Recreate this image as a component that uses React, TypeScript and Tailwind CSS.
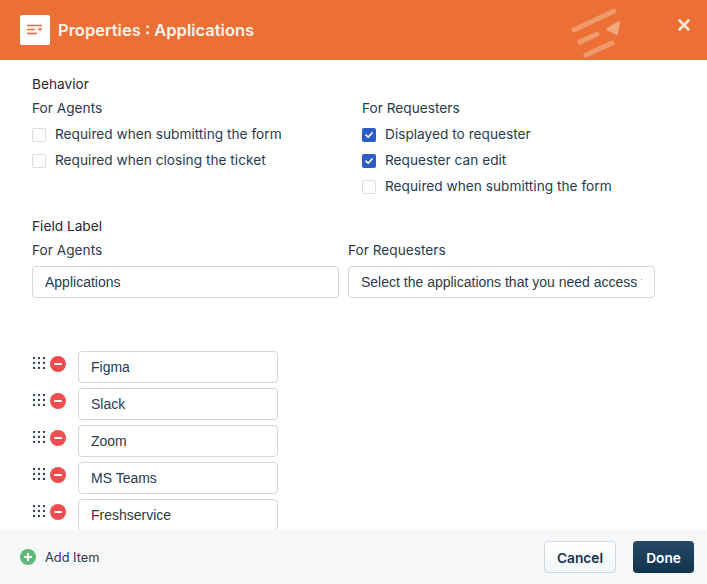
import React from "react";

const inter = "font-['Inter',sans-serif]";
const arial = "font-['Liberation_Sans',sans-serif]";

function Check({ label, checked }: { label: string; checked?: boolean }) {
  return (
    <div className="flex items-center h-[26px]">
      {checked ? (
        <span className="w-3.5 h-3.5 mt-[2px] rounded-[2px] bg-[#2c5cc5] flex items-center justify-center mr-[9px]">
          <svg width="10" height="10" viewBox="0 0 10 10" fill="none">
            <path d="M2 5.2 L4.2 7.2 L8 3" stroke="#fff" strokeWidth="1.7" strokeLinecap="round" strokeLinejoin="round" />
          </svg>
        </span>
      ) : (
        <span className="w-3.5 h-3.5 mt-[2px] rounded-[2px] bg-white border border-[#dadfe3] mr-[9px]" />
      )}
      <span className="text-[13.7px] leading-5 text-[#2a3b4d]">{label}</span>
    </div>
  );
}

function Grip() {
  const at = [1, 6, 11];
  return (
    <svg className="ml-px mb-[2px] shrink-0" width="12" height="12" viewBox="0 0 12 12" fill="#2a3b4d">
      {at.map((y) => at.map((x) => <circle key={`${x}-${y}`} cx={x} cy={y} r="1.15" />))}
    </svg>
  );
}

function Item({ label }: { label: string }) {
  return (
    <div className="flex items-start h-[37px] shrink-0">
      <div className="flex items-center w-[46px] pt-[5px]">
        <Grip />
        <span className="ml-[5px] w-4 h-4 rounded-full bg-[#ef4d4f] flex items-center justify-center">
          <span className="w-2 h-[2px] bg-white rounded-[1px]" />
        </span>
      </div>
      <div className={`w-[200px] h-8 rounded-[4px] bg-white border border-[#cfd7df] px-3 flex items-center text-[14px] text-[#2a3b4d] ${arial}`}>
        {label}
      </div>
    </div>
  );
}

function TextBox({ value, className }: { value: string; className: string }) {
  return (
    <div className={`h-8 rounded-[4px] bg-white border border-[#cfd7df] pl-3 pr-3 flex items-center text-[14px] text-[#2a3b4d] overflow-hidden whitespace-nowrap ${arial} ${className}`}>
      <span className="overflow-hidden">{value}</span>
    </div>
  );
}

export default function App() {
  return (
    <div className={`w-[707px] h-[584px] bg-white flex flex-col overflow-hidden ${inter}`}>
      <header className="h-[60px] shrink-0 bg-[#ec7036] flex items-center pl-5 pr-4 relative overflow-hidden">
        <span className="w-[30px] h-[30px] bg-white rounded-[2px] flex items-center justify-center">
          <svg width="18" height="12" viewBox="0 0 18 12" fill="none">
            <path d="M1 1.5H16" stroke="#ec7036" strokeWidth="1.6" />
            <path d="M1 5.5H9" stroke="#ec7036" strokeWidth="1.6" />
            <path d="M1 9.5H11" stroke="#ec7036" strokeWidth="1.6" />
            <path d="M11.5 4.2H16.5L14 7.2Z" fill="#ec7036" />
          </svg>
        </span>
        <span className="ml-2 text-[16.5px] font-semibold text-[#fff3ec]">Properties : Applications</span>
        <svg className="absolute left-[568px] top-[6px]" width="56" height="54" viewBox="0 0 56 54" fill="none">
          <path d="M6 24 L46 5" stroke="#f09a6c" strokeWidth="5" strokeLinecap="round" />
          <path d="M12 36 L29 28" stroke="#f09a6c" strokeWidth="5" strokeLinecap="round" />
          <path d="M18 49 L44 37" stroke="#f09a6c" strokeWidth="5" strokeLinecap="round" />
          <path d="M39 23 L51 16 L49 28 Z" fill="#f2a77c" stroke="#f2a77c" strokeWidth="2" strokeLinejoin="round" />
        </svg>
        <svg className="absolute left-[677px] top-[18px]" width="14" height="14" viewBox="0 0 14 14" fill="none">
          <path d="M2.5 2.5 L11.5 11.5 M11.5 2.5 L2.5 11.5" stroke="#fde6d8" strokeWidth="2.6" strokeLinecap="round" />
        </svg>
      </header>

      <main className="flex-1 min-h-0 overflow-hidden pl-8 pr-[52px] pt-[14px] text-[13.7px] text-[#2a3b4d]">
        <div className="h-5 leading-5 text-[#1f2a37]">Behavior</div>
        <div className="flex mt-1">
          <div className="w-[330px]">
            <div className="h-5 leading-5 mb-[3px]">For Agents</div>
            <Check label="Required when submitting the form" />
            <Check label="Required when closing the ticket" />
          </div>
          <div>
            <div className="h-5 leading-5 mb-[3px]">For Requesters</div>
            <Check label="Displayed to requester" checked />
            <Check label="Requester can edit" checked />
            <Check label="Required when submitting the form" />
          </div>
        </div>

        <div className="h-5 leading-5 mt-[17px] text-[#1f2a37]">Field Label</div>
        <div className="flex gap-[9px] mt-1">
          <div className="w-[307px]">
            <div className="h-5 leading-5 mb-1.5">For Agents</div>
            <TextBox value="Applications" className="w-[307px]" />
          </div>
          <div className="w-[307px]">
            <div className="h-5 leading-5 mb-1.5">For Requesters</div>
            <TextBox value="Select the applications that you need access to" className="w-[307px]" />
          </div>
        </div>

        <div className="flex flex-col mt-[53px]">
          {["Figma", "Slack", "Zoom", "MS Teams", "Freshservice"].map((l) => (
            <Item key={l} label={l} />
          ))}
        </div>
      </main>

      <footer className="h-[54px] shrink-0 bg-[#f5f7f9] flex items-center pl-5 pr-[13px]">
        <span className="w-4 h-4 rounded-full bg-[#62b878] flex items-center justify-center relative">
          <span className="w-2 h-[2px] bg-white" />
          <span className="absolute w-[2px] h-2 bg-white" />
        </span>
        <span className="ml-[9px] mt-[2px] text-[12.8px] text-[#2a3b4d]">Add Item</span>
        <button className="ml-auto w-[72px] h-8 pt-[2px] rounded-[4px] border border-[#cfd7df] bg-gradient-to-b from-white to-[#f3f5f7] text-[13.7px] font-semibold text-[#12344d]">Cancel</button>
        <button className="ml-[17px] w-[61px] h-8 pt-[2px] rounded-[4px] bg-gradient-to-b from-[#264966] to-[#12344d] text-[13.7px] font-semibold text-white">Done</button>
      </footer>
    </div>
  );
}
